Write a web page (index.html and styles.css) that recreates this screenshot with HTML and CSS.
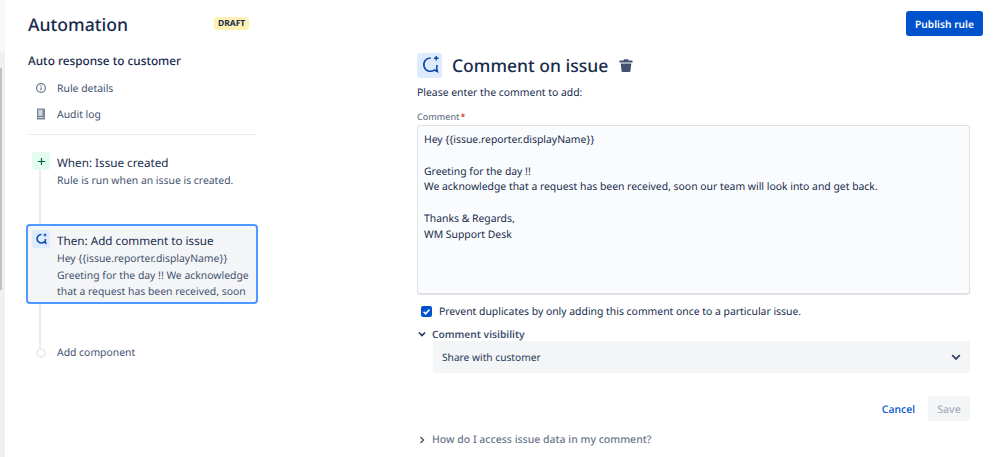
FILE: index.html
```html
<!DOCTYPE html>
<html lang="en">
<head>
<meta charset="utf-8">
<title>Automation</title>
<link rel="stylesheet" href="styles.css">
</head>
<body>
<div class="page">
  <div class="rail"><div class="rail-top"></div><div class="rail-gap"></div><div class="rail-thumb"></div></div>
  <aside class="side">
    <div class="side-head">
      <h1 class="title">Automation</h1>
      <span class="lozenge">DRAFT</span>
    </div>
    <h2 class="rule-name">Auto response to customer</h2>
    <ul class="nav">
      <li class="nav-item">
        <svg class="nav-icon" viewBox="0 0 14 14"><circle cx="7" cy="7" r="4.400" fill="none" stroke="#6b778c" stroke-width="1.300"/><rect x="6.400" y="6.400" width="1.200" height="3" fill="#6b778c"/><rect x="6.400" y="4.400" width="1.200" height="1.200" fill="#6b778c"/></svg>
        <span>Rule details</span>
      </li>
      <li class="nav-item">
        <svg class="nav-icon" viewBox="0 0 14 14"><path d="M3.500 1.500h7a.5.5 0 0 1 .5.5v10a.5.5 0 0 1-.5.5h-7a.5.5 0 0 1-.5-.5V2a.500.500 0 0 1 .5-.5z" fill="#7a869a"/><rect x="4.300" y="2.800" width="4.200" height="6" fill="#fff" opacity=".65"/><rect x="4.300" y="10" width="5.400" height="1" fill="#fff" opacity=".65"/></svg>
        <span>Audit log</span>
      </li>
    </ul>
    <div class="steps">
      <div class="step step-when">
        <span class="badge badge-green">
          <svg viewBox="0 0 10 10" class="badge-plus"><path d="M5 1v8M1 5h8" stroke="#006644" stroke-width="1.300" fill="none"/></svg>
        </span>
        <div class="step-body">
          <div class="step-title">When: Issue created</div>
          <div class="step-text">Rule is run when an issue is created.</div>
        </div>
      </div>
      <div class="step step-then">
        <span class="badge badge-blue">
          <svg viewBox="0 0 14 14" class="badge-comment"><path d="M7.500 2.600A4.200 4.200 0 1 0 9.700 10.200l2 1-.5-2.100A4.200 4.200 0 0 0 11.400 7" fill="none" stroke="#0747a6" stroke-width="1.500"/><path d="M11 1.500v3M9.500 3h3" stroke="#0747a6" stroke-width="1.100"/></svg>
        </span>
        <div class="step-body">
          <div class="step-title">Then: Add comment to issue</div>
          <div class="step-text">Hey {{issue.reporter.displayName}}<br>Greeting for the day !! We acknowledge<br>that a request has been received, soon</div>
        </div>
      </div>
      <div class="step step-add">
        <span class="dot"></span>
        <div class="step-text">Add component</div>
      </div>
    </div>
  </aside>
  <main class="main">
    <div class="topbar"><button class="btn-primary" type="button">Publish rule</button></div>
    <div class="panel">
      <div class="panel-head">
        <span class="panel-icon">
          <svg viewBox="0 0 14 14"><path d="M7.500 2.600A4.200 4.200 0 1 0 9.700 10.200l2 1-.5-2.100A4.200 4.200 0 0 0 11.400 7" fill="none" stroke="#0747a6" stroke-width="1"/><path d="M11 1.200v3M9.500 2.700h3" stroke="#0747a6" stroke-width=".9"/></svg>
        </span>
        <h2 class="panel-title">Comment on issue</h2>
        <svg class="trash" viewBox="0 0 14 13"><path d="M5 .3h4l.6 1.300h3.400a.6.6 0 0 1 .6.6v1.300H.4V2.200a.6.6 0 0 1 .6-.6h3.400z" fill="#42526e"/><path d="M1.700 4.500h10.600l-.9 7.700a.9.9 0 0 1-.9.8H3.500a.9.9 0 0 1-.9-.8z" fill="#42526e"/></svg>
      </div>
      <p class="hint">Please enter the comment to add:</p>
      <label class="field-label">Comment<span class="req">*</span></label>
      <div class="textarea">
        <p>Hey {{issue.reporter.displayName}}</p>
        <p class="gap">Greeting for the day !!</p>
        <p>We acknowledge that a request has been received, soon our team will look into and get back.</p>
        <p class="gap">Thanks &amp; Regards,</p>
        <p>WM Support Desk</p>
      </div>
      <div class="check-row">
        <span class="checkbox"><svg viewBox="0 0 12 12"><path d="M2.800 6.200l2.300 2.300 4.200-4.700" fill="none" stroke="#fff" stroke-width="1.700"/></svg></span>
        <span class="check-text">Prevent duplicates by only adding this comment once to a particular issue.</span>
      </div>
      <div class="vis-label">
        <svg class="chev-s" viewBox="0 0 10 10"><path d="M2 3.500l3 3 3-3" fill="none" stroke="#253858" stroke-width="1.700"/></svg>
        <span>Comment visibility</span>
      </div>
      <div class="select">
        <span>Share with customer</span>
        <svg class="chev-l" viewBox="0 0 12 12"><path d="M2.200 4.200L6 8l3.800-3.800" fill="none" stroke="#344563" stroke-width="1.800"/></svg>
      </div>
      <div class="actions">
        <a class="cancel">Cancel</a>
        <button class="btn-save" type="button">Save</button>
      </div>
      <div class="help">
        <svg class="chev-s" viewBox="0 0 10 10"><path d="M3.500 2l3 3-3 3" fill="none" stroke="#505f79" stroke-width="1.500"/></svg>
        <span>How do I access issue data in my comment?</span>
      </div>
    </div>
  </main>
</div>
</body>
</html>
```
FILE: styles.css
```css
* { box-sizing: border-box; }
html, body { margin: 0; padding: 0; background: #fff; overflow: hidden; }
body { font-family: "Noto Sans", "Open Sans", sans-serif; color: #172b4d; font-size: 10.400px; text-rendering: geometricPrecision; }
button { text-rendering: geometricPrecision; }
.page { display: flex; width: 999px; height: 457px; overflow: hidden; }
.rail { width: 5px; flex: none; background: #f0f0f0; }
.rail-top { height: 52px; background: #f7f8fa; }
.rail-gap { height: 16px; }
.rail-thumb { width: 2px; height: 222px; background: #c1c1c1; }
.side { width: 252px; flex: none; margin-left: 1px; padding: 12px 0 0 22px; }
.side-head { display: flex; align-items: flex-start; height: 24px; }
.title { margin: 1px 0 0; font-size: 17.600px; line-height: 24px; font-weight: 500; color: #172b4d; width: 186px; }
.lozenge { background: #fff0b3; color: #172b4d; font-size: 8.500px; font-weight: 700; line-height: 13px; padding: 0 4px; margin-top: 5px; border-radius: 3px; }
.rule-name { margin: 17px 0 0; font-size: 11.800px; line-height: 17px; font-weight: 500; }
.nav { list-style: none; margin: 5px 0 0; padding: 0 0 7px; border-bottom: 1px solid #ebecf0; width: 229px; }
.nav-item { display: flex; align-items: center; height: 26px; color: #42526e; font-size: 10.400px; }
.nav-item span { margin-top: 2px; }
.nav-icon { width: 14px; height: 14px; margin-left: 6px; margin-right: 9px; flex: none; }
.steps { position: relative; margin-top: 17px; width: 230px; }
.steps::before { content: ""; position: absolute; left: 11px; top: 10px; height: 190px; width: 2px; background: #ebecf0; }
.step { position: relative; display: flex; }
.badge { flex: none; width: 18px; height: 18px; border-radius: 3px; display: flex; align-items: center; justify-content: center; margin-left: 4px; margin-right: 7px; }
.badge-green { background: #e3fcef; }
.badge-blue { background: #deebff; }
.badge-plus { width: 9px; height: 9px; }
.badge-comment { width: 14px; height: 14px; }
.step-title { font-size: 11.700px; line-height: 22px; color: #172b4d; }
.step-text { font-size: 10.400px; line-height: 17px; color: #42526e; }
.step-when { height: 72px; }
.step-when .step-text { margin-top: -1px; }
.step-then { height: 80px; margin-left: -2px; padding: 4px 0 0 0; background: #f4f5f7; border: 2px solid #4c9aff; border-radius: 4px; width: 232px; margin-right: -2px; }
.step-then .step-text { font-size: 10.400px; line-height: 16.500px; margin-top: -1px; }
.step-add { align-items: center; margin-top: 40px; height: 17px; }
.step-add .step-text { margin-top: 2px; }
.dot { width: 10px; height: 10px; border-radius: 50%; background: #fff; border: 2px solid #ebecf0; margin: 0 11px 0 8px; flex: none; }
.main { flex: 1; min-width: 0; padding: 0 29px 0 159px; }
.topbar { display: flex; justify-content: flex-end; padding-top: 11px; height: 52px; margin-right: -13px; }
.btn-primary { height: 25px; width: 77px; border: 0; border-radius: 3px; background: #0052cc; color: #fff; font: 600 10.200px "Noto Sans", sans-serif; padding: 0; }
.panel-head { display: flex; align-items: center; height: 26px; }
.panel-icon { width: 25px; height: 25px; border-radius: 3px; background: #deebff; display: flex; align-items: center; justify-content: center; margin-right: 10px; }
.panel-icon svg { width: 22px; height: 22px; }
.panel-title { margin: 2px 0 0; font-size: 17.500px; line-height: 26px; font-weight: 500; }
.trash { width: 14px; height: 13px; margin-left: 11px; }
.hint { margin: 8px 0 0; font-size: 10.400px; line-height: 14px; color: #172b4d; }
.field-label { display: block; margin-top: 10px; font-size: 9px; line-height: 13px; color: #6b778c; font-weight: 500; }
.req { color: #de350b; margin-left: 1px; }
.textarea { margin-top: 2px; height: 170px; border: 2px solid #dfe1e6; border-width: 1px 1px 2px; border-radius: 3px; background: #fafbfc; padding: 7px 6px 5px; font-size: 10.400px; line-height: 15.800px; }
.textarea p { margin: 0; }
.textarea .gap { margin-top: 15.800px; }
.check-row { display: flex; align-items: center; height: 16px; margin-top: 8px; padding-left: 4px; color: #172b4d; }
.checkbox { width: 11px; height: 11px; border-radius: 2px; background: #0052cc; margin-right: 7px; flex: none; display: flex; }
.check-text { line-height: 16px; margin-top: 2px; }
.checkbox svg { width: 11px; height: 11px; }
.vis-label { display: flex; align-items: center; height: 15px; margin-top: 7px; font-weight: 600; font-size: 10.200px; color: #42526e; }
.chev-s { width: 10px; height: 10px; margin-right: 5px; flex: none; }
.select { margin: 0 0 0 16px; height: 32px; background: #f4f5f7; border-radius: 3px; display: flex; align-items: center; justify-content: space-between; padding: 0 8px 0 9px; color: #253858; font-size: 10.200px; }
.chev-l { width: 12px; height: 12px; }
.actions { display: flex; justify-content: flex-end; align-items: center; margin-top: 23px; height: 25px; }
.cancel { color: #0052cc; font-weight: 500; font-size: 10.500px; margin: 2px 13px 0 0; }
.btn-save { width: 42px; height: 25px; border: 0; border-radius: 3px; background: #f4f5f7; color: #a5adba; font: 500 10.500px "Noto Sans", sans-serif; padding: 2px 0 0; }
.help { display: flex; align-items: center; margin-top: 11px; height: 16px; color: #6b778c; font-weight: 500; font-size: 10.500px; }
```
